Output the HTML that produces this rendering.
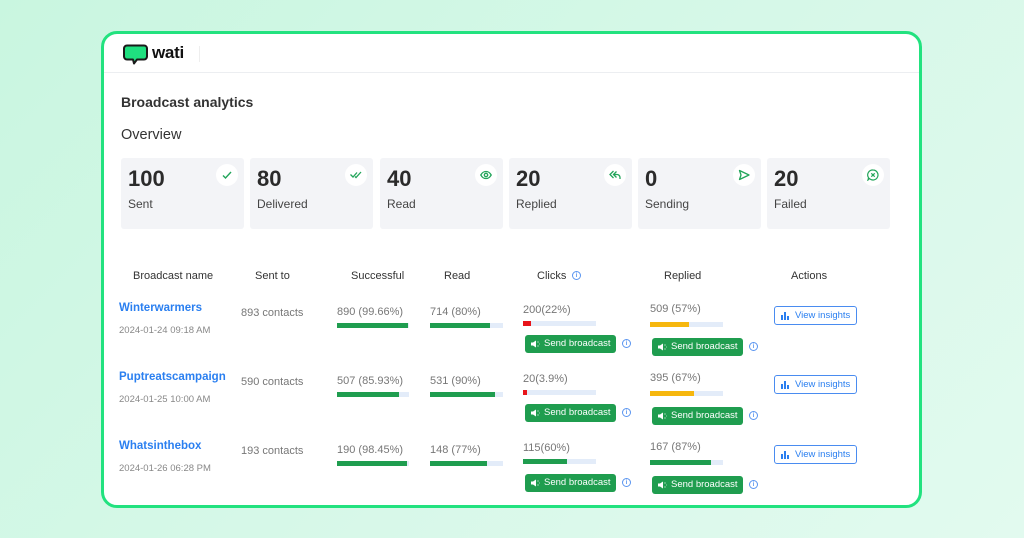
<!DOCTYPE html>
<html><head><meta charset="utf-8"><style>
*{margin:0;padding:0;box-sizing:border-box}
body{width:1024px;height:538px;overflow:hidden;font-family:"Liberation Sans",sans-serif;background:linear-gradient(135deg,#c9f6e0 0%,#d6f8e8 50%,#e2faef 100%);position:relative}
.card{position:absolute;left:101px;top:31px;width:821px;height:477px;background:#fff;border:3px solid #22e27f;border-radius:16px;overflow:hidden}
.a{position:absolute;white-space:nowrap}
.stat{position:absolute;top:158px;width:123px;height:71px;background:#f3f4f7;border-radius:3px}
.stat .n{position:absolute;left:7px;top:8px;font-size:22px;font-weight:bold;color:#2b2b2b}
.stat .l{position:absolute;left:7px;top:39px;font-size:12px;color:#444}
.stat .ic{position:absolute;right:6px;top:6px;width:22px;height:22px;border-radius:50%;background:#fff}
.stat .ic svg{position:absolute;left:5px;top:5px}
.th{position:absolute;top:270px;font-size:11px;color:#333}
.nm{font-size:11.5px;font-weight:bold;color:#2a7ff0}
.dt{font-size:9.5px;color:#888}
.g{font-size:11px;color:#777}
.bar{position:absolute;height:5px;background:#e3ecf9}
.bar i{position:absolute;left:0;top:0;bottom:0;display:block}
.btn{position:absolute;width:91px;height:18px;background:#1f9d4f;border-radius:3px;color:#fff;font-size:9.5px;line-height:18px;padding-left:19px}
.btn svg{position:absolute;left:5px;top:5px}
.inf{position:absolute;width:9px;height:9px;border:1px solid #5a95f0;border-radius:50%;font-size:6px;color:#5a95f0;text-align:center;line-height:8px;font-weight:bold}
.vi{position:absolute;width:83px;height:19px;border:1px solid #4a8cf0;border-radius:3px;color:#2a7ff0;font-size:9.5px;line-height:17px;padding-left:20px}
.vi svg{position:absolute;left:6px;top:4px}
</style></head><body>
<div class="card"></div>
<div class="a" style="left:104px;top:72px;width:815px;height:1px;background:#eceef1"></div>
<div class="a" style="left:199px;top:46px;width:1px;height:16px;background:#eee"></div>
<svg class="a" style="left:123px;top:44px" width="26" height="22" viewBox="0 0 26 22"><path d="M4 1.5h17a3 3 0 0 1 3 3v8a3 3 0 0 1-3 3h-7l-3 4-1-4H4a3 3 0 0 1-3-3v-8a3 3 0 0 1 3-3z" fill="#1fe07f" stroke="#1a1a1a" stroke-width="2" stroke-linejoin="round"/></svg>
<div class="a" style="left:152px;top:43px;font-size:17px;font-weight:bold;color:#111;letter-spacing:-0.3px">wati</div>
<div class="a" style="left:121px;top:94px;font-size:14px;font-weight:bold;color:#333">Broadcast analytics</div>
<div class="a" style="left:121px;top:127px;font-size:14.5px;color:#333">Overview</div>

<div class="stat" style="left:121px"><div class="n">100</div><div class="l">Sent</div><div class="ic"><svg width="12" height="12" viewBox="0 0 12 12"><path d="M2 6.5l2.5 2.5L10 3" fill="none" stroke="#22a55a" stroke-width="1.4"/></svg></div></div>
<div class="stat" style="left:250px"><div class="n">80</div><div class="l">Delivered</div><div class="ic"><svg width="12" height="12" viewBox="0 0 12 12"><path d="M0.5 5.5l2.5 2.5L7 3.5M5 7.5L6 8.5 11 3" fill="none" stroke="#22a55a" stroke-width="1.3"/></svg></div></div>
<div class="stat" style="left:380px"><div class="n">40</div><div class="l">Read</div><div class="ic"><svg width="12" height="12" viewBox="0 0 12 12"><path d="M0.8 6C2.5 3 4 2.5 6 2.5S9.5 3 11.2 6C9.5 9 8 9.5 6 9.5S2.5 9 0.8 6z" fill="none" stroke="#22a55a" stroke-width="1.3"/><circle cx="6" cy="6" r="1.7" fill="none" stroke="#22a55a" stroke-width="1.3"/></svg></div></div>
<div class="stat" style="left:509px"><div class="n">20</div><div class="l">Replied</div><div class="ic"><svg width="12" height="12" viewBox="0 0 12 12"><path d="M4.5 2L1 5.5 4.5 9M7.5 2.5L4.5 5.5 7.5 8.5M4.5 5.5H8a3 3 0 0 1 3 3V10" fill="none" stroke="#22a55a" stroke-width="1.3"/></svg></div></div>
<div class="stat" style="left:638px"><div class="n">0</div><div class="l">Sending</div><div class="ic"><svg width="12" height="12" viewBox="0 0 12 12"><path d="M1.5 1.5L11 6 1.5 10.5 3 6z" fill="none" stroke="#22a55a" stroke-width="1.3" stroke-linejoin="round"/></svg></div></div>
<div class="stat" style="left:767px"><div class="n">20</div><div class="l">Failed</div><div class="ic"><svg width="12" height="12" viewBox="0 0 12 12"><path d="M6 1a5 5 0 1 1-3.6 8.5L1 11l.5-2.3A5 5 0 0 1 6 1z" fill="none" stroke="#22a55a" stroke-width="1.2"/><path d="M4.3 4.3l3.4 3.4M7.7 4.3L4.3 7.7" stroke="#22a55a" stroke-width="1.2"/></svg></div></div>

<div class="th" style="left:133px">Broadcast name</div>
<div class="th" style="left:255px">Sent to</div>
<div class="th" style="left:351px">Successful</div>
<div class="th" style="left:444px">Read</div>
<div class="th" style="left:537px">Clicks</div>
<div class="inf" style="left:572px;top:271px">i</div>
<div class="th" style="left:664px">Replied</div>
<div class="th" style="left:791px">Actions</div>

<!-- rows -->
<div id="rows"></div>
<div class="a nm" style="left:119px;top:302px">Winterwarmers</div>
<div class="a dt" style="left:119px;top:325px">2024-01-24 09:18 AM</div>
<div class="a g" style="left:241px;top:307px">893 contacts</div>
<div class="a g" style="left:337px;top:306px">890 (99.66%)</div>
<div class="bar" style="left:337px;top:323px;width:72px"><i style="width:71px;background:#1f9d4f"></i></div>
<div class="a g" style="left:430px;top:306px">714 (80%)</div>
<div class="bar" style="left:430px;top:323px;width:73px"><i style="width:60px;background:#1f9d4f"></i></div>
<div class="a g" style="left:523px;top:304px">200(22%)</div>
<div class="bar" style="left:523px;top:321px;width:73px"><i style="width:8px;background:#e8141a"></i></div>
<div class="btn" style="left:525px;top:335px"><svg width="10" height="8" viewBox="0 0 10 8"><path d="M1 2.5h2L6 .5v7L3 5.5H1z" fill="#fff"/><path d="M8 1.5v1M8 5.5v1M9 4h.5" stroke="#fff"/></svg>Send broadcast</div>
<div class="inf" style="left:622px;top:339px">i</div>
<div class="a g" style="left:650px;top:303px">509 (57%)</div>
<div class="bar" style="left:650px;top:322px;width:73px"><i style="width:39px;background:#f6b70e"></i></div>
<div class="btn" style="left:652px;top:338px"><svg width="10" height="8" viewBox="0 0 10 8"><path d="M1 2.5h2L6 .5v7L3 5.5H1z" fill="#fff"/><path d="M8 1.5v1M8 5.5v1M9 4h.5" stroke="#fff"/></svg>Send broadcast</div>
<div class="inf" style="left:749px;top:342px">i</div>
<div class="vi" style="left:774px;top:306px"><svg width="9" height="9" viewBox="0 0 9 9"><path d="M1 4v5M4 1v8M7 5v4" stroke="#2a7ff0" stroke-width="2"/></svg>View insights</div>

<div class="a nm" style="left:119px;top:371px">Puptreatscampaign</div>
<div class="a dt" style="left:119px;top:394px">2024-01-25 10:00 AM</div>
<div class="a g" style="left:241px;top:376px">590 contacts</div>
<div class="a g" style="left:337px;top:375px">507 (85.93%)</div>
<div class="bar" style="left:337px;top:392px;width:72px"><i style="width:62px;background:#1f9d4f"></i></div>
<div class="a g" style="left:430px;top:375px">531 (90%)</div>
<div class="bar" style="left:430px;top:392px;width:73px"><i style="width:65px;background:#1f9d4f"></i></div>
<div class="a g" style="left:523px;top:373px">20(3.9%)</div>
<div class="bar" style="left:523px;top:390px;width:73px"><i style="width:4px;background:#e8141a"></i></div>
<div class="btn" style="left:525px;top:404px"><svg width="10" height="8" viewBox="0 0 10 8"><path d="M1 2.5h2L6 .5v7L3 5.5H1z" fill="#fff"/><path d="M8 1.5v1M8 5.5v1M9 4h.5" stroke="#fff"/></svg>Send broadcast</div>
<div class="inf" style="left:622px;top:408px">i</div>
<div class="a g" style="left:650px;top:372px">395 (67%)</div>
<div class="bar" style="left:650px;top:391px;width:73px"><i style="width:44px;background:#f6b70e"></i></div>
<div class="btn" style="left:652px;top:407px"><svg width="10" height="8" viewBox="0 0 10 8"><path d="M1 2.5h2L6 .5v7L3 5.5H1z" fill="#fff"/><path d="M8 1.5v1M8 5.5v1M9 4h.5" stroke="#fff"/></svg>Send broadcast</div>
<div class="inf" style="left:749px;top:411px">i</div>
<div class="vi" style="left:774px;top:375px"><svg width="9" height="9" viewBox="0 0 9 9"><path d="M1 4v5M4 1v8M7 5v4" stroke="#2a7ff0" stroke-width="2"/></svg>View insights</div>

<div class="a nm" style="left:119px;top:440px">Whatsinthebox</div>
<div class="a dt" style="left:119px;top:463px">2024-01-26 06:28 PM</div>
<div class="a g" style="left:241px;top:445px">193 contacts</div>
<div class="a g" style="left:337px;top:444px">190 (98.45%)</div>
<div class="bar" style="left:337px;top:461px;width:72px"><i style="width:70px;background:#1f9d4f"></i></div>
<div class="a g" style="left:430px;top:444px">148 (77%)</div>
<div class="bar" style="left:430px;top:461px;width:73px"><i style="width:57px;background:#1f9d4f"></i></div>
<div class="a g" style="left:523px;top:442px">115(60%)</div>
<div class="bar" style="left:523px;top:459px;width:73px"><i style="width:44px;background:#1f9d4f"></i></div>
<div class="btn" style="left:525px;top:474px"><svg width="10" height="8" viewBox="0 0 10 8"><path d="M1 2.5h2L6 .5v7L3 5.5H1z" fill="#fff"/><path d="M8 1.5v1M8 5.5v1M9 4h.5" stroke="#fff"/></svg>Send broadcast</div>
<div class="inf" style="left:622px;top:478px">i</div>
<div class="a g" style="left:650px;top:441px">167 (87%)</div>
<div class="bar" style="left:650px;top:460px;width:73px"><i style="width:61px;background:#1f9d4f"></i></div>
<div class="btn" style="left:652px;top:476px"><svg width="10" height="8" viewBox="0 0 10 8"><path d="M1 2.5h2L6 .5v7L3 5.5H1z" fill="#fff"/><path d="M8 1.5v1M8 5.5v1M9 4h.5" stroke="#fff"/></svg>Send broadcast</div>
<div class="inf" style="left:749px;top:480px">i</div>
<div class="vi" style="left:774px;top:445px"><svg width="9" height="9" viewBox="0 0 9 9"><path d="M1 4v5M4 1v8M7 5v4" stroke="#2a7ff0" stroke-width="2"/></svg>View insights</div>
</body></html>
